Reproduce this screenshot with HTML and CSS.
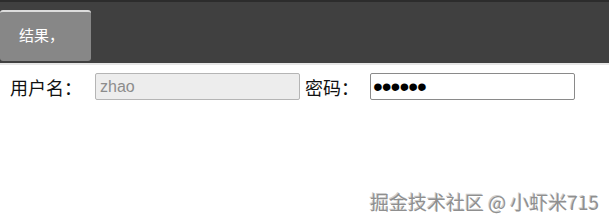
FILE: index.html
```html
<!DOCTYPE html>
<html lang="zh-CN">
<head>
  <meta charset="UTF-8">
  <title>结果</title>
  <link rel="stylesheet" href="styles.css">
</head>
<body>
  <div class="topbar">
    <button class="tab-btn">结果，</button>
  </div>

  <!-- login row -->
  <div class="form-row">
    <label class="label">用户名：</label>
    <input type="text" class="field" value="zhao" disabled>
    <label class="label pwd-label">密码：</label>
    <input type="password" class="field pwd" value="123456">
  </div>

  <div class="watermark">掘金技术社区 @ 小虾米715</div>
</body>
</html>
```

FILE: styles.css
```css
body {
  margin: 0;
  background: #ffffff;
  font-family: "Liberation Sans", Arial, sans-serif;
  position: relative;
  height: 222px;
  overflow: hidden;
}
.topbar {
  height: 61px;
  background-color: #404040;
  border-top: 2px solid #2c2c2c;
  border-bottom: 2px solid #e6e6e6;
  box-sizing: content-box;
  display: flex;
  align-items: flex-start;
}
.tab-btn {
  margin-top: 8px;
  width: 91px;
  height: 51px;
  background-color: #878787;
  border: none;
  border-top: 2px solid #dcdcdc;
  border-radius: 3px;
  color: #ffffff;
  font-family: "Noto Sans CJK SC", sans-serif;
  font-size: 15px;
  padding: 0 0 4px 19px;
  text-align: left;
}
.form-row {
  display: flex;
  align-items: center;
  padding: 8px 0 0 10px;
}
.label {
  font-family: "Liberation Serif", "Noto Sans CJK SC", serif;
  font-size: 18px;
  color: #111;
  width: 85px;
}
.pwd-label {
  width: 65px;
  margin-left: 5px;
}
.field {
  width: 205px;
  height: 27px;
  box-sizing: border-box;
  border: 1px solid #8a8a8a;
  border-radius: 2px;
  padding: 0 4px;
  font-family: "Liberation Sans", Arial, sans-serif;
  font-size: 16px;
  color: #000;
  background: #fff;
}
.field:disabled {
  background: #ededed;
  color: #8c8c8c;
  border-color: #b5b5b5;
}
.pwd {
  font-size: 28px;
  line-height: 25px;
  letter-spacing: -1px;
  padding-left: 2px;
}
.watermark {
  position: absolute;
  right: 10px;
  bottom: 7px;
  font-family: "Noto Sans CJK SC", sans-serif;
  font-size: 19px;
  color: #8f8f8f;
  text-shadow: 1px 1px 0 #ffffff, -1px -1px 0 #cfcfcf;
}
```
